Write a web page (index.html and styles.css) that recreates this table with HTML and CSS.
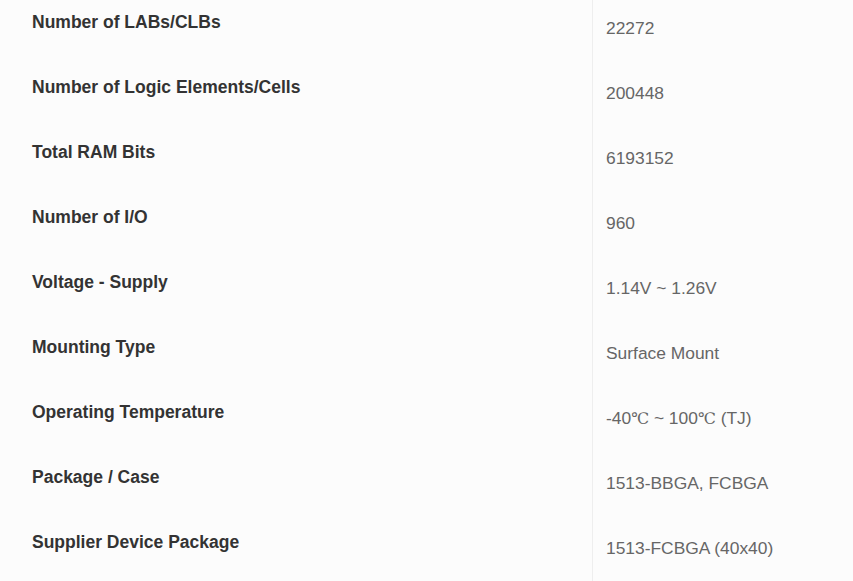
FILE: index.html
```html
<!DOCTYPE html>
<html>
<head>
<meta charset="utf-8">
<link rel="stylesheet" href="styles.css">
</head>
<body>
<div class="specs">
  <div class="row"><div class="label">Number of LABs/CLBs</div><div class="value">22272</div></div>
  <div class="row"><div class="label">Number of Logic Elements/Cells</div><div class="value">200448</div></div>
  <div class="row"><div class="label">Total RAM Bits</div><div class="value">6193152</div></div>
  <div class="row"><div class="label">Number of I/O</div><div class="value">960</div></div>
  <div class="row"><div class="label">Voltage - Supply</div><div class="value">1.14V ~ 1.26V</div></div>
  <div class="row"><div class="label">Mounting Type</div><div class="value">Surface Mount</div></div>
  <div class="row"><div class="label">Operating Temperature</div><div class="value">-40<span class="deg">℃</span> ~ 100<span class="deg">℃</span> (TJ)</div></div>
  <div class="row"><div class="label">Package / Case</div><div class="value">1513-BBGA, FCBGA</div></div>
  <div class="row"><div class="label">Supplier Device Package</div><div class="value">1513-FCBGA (40x40)</div></div>
</div>
</body>
</html>
```
FILE: styles.css
```css
html, body {
  margin: 0;
  padding: 0;
  background: #fcfcfc;
}
body {
  font-family: "Liberation Sans", Arial, sans-serif;
  font-size: 17.4px;
  line-height: 20px;
  overflow: hidden;
}
.specs {
  display: flex;
  flex-direction: column;
}
.row {
  display: grid;
  grid-template-columns: 592px 1fr;
  height: 65.1px;
}
.label {
  font-weight: bold;
  font-size: 17.5px;
  color: #333;
  padding: 11.5px 0 0 32px;
}
.value {
  color: #666;
  border-left: 1px solid #eeeeee;
  padding: 17.5px 0 0 13px;
}
.deg {
  font-family: "DejaVu Serif", "Noto Sans CJK SC", serif;
  font-size: 16px;
}
```
